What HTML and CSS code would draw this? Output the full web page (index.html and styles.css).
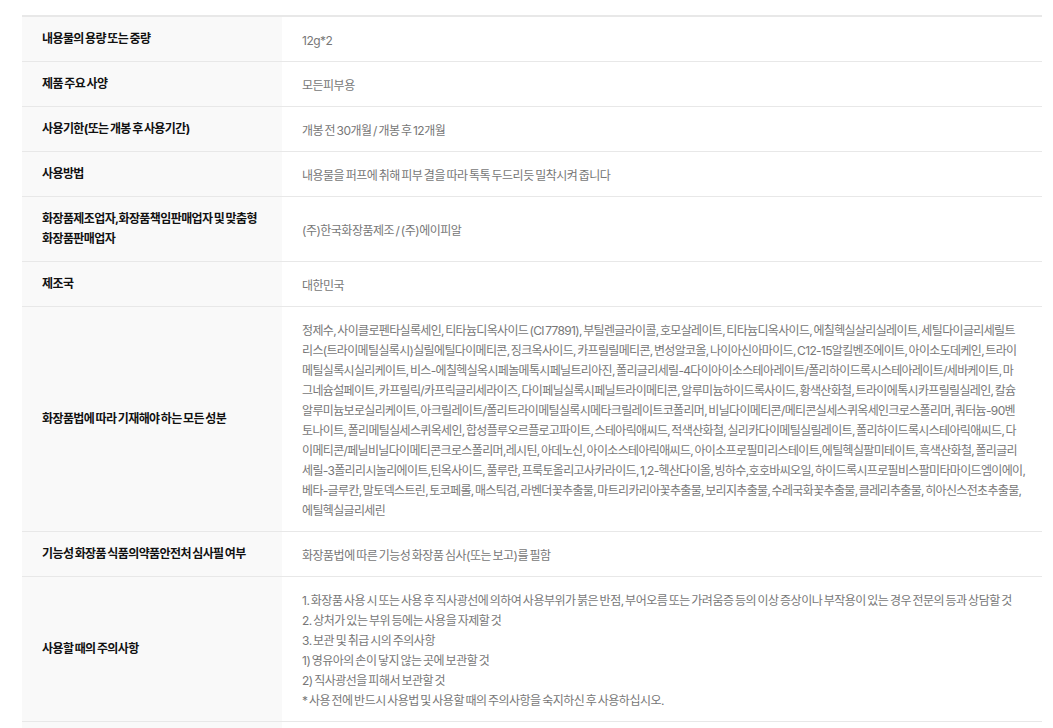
FILE: index.html
```html
<!DOCTYPE html>
<html lang="ko">
<head>
<meta charset="utf-8">
<title>상품정보제공고시</title>
<link rel="stylesheet" href="styles.css">
</head>
<body>
<main class="page">
<table class="info">
<tbody>
<tr><th>내용물의 용량 또는 중량</th><td>12g*2</td></tr>
<tr><th>제품 주요 사양</th><td>모든피부용</td></tr>
<tr><th>사용기한(또는 개봉 후 사용기간)</th><td>개봉 전 30개월 / 개봉 후 12개월</td></tr>
<tr><th>사용방법</th><td>내용물을 퍼프에 취해 피부 결을 따라 톡톡 두드리듯 밀착시켜 줍니다</td></tr>
<tr><th>화장품제조업자,화장품책임판매업자 및 맞춤형 화장품판매업자</th><td>(주)한국화장품제조 / (주)에이피알</td></tr>
<tr><th>제조국</th><td>대한민국</td></tr>
<tr><th>화장품법에 따라 기재해야 하는 모든 성분</th><td class="dense">정제수, 사이클로펜타실록세인, 티타늄디옥사이드 (CI 77891), 부틸렌글라이콜, 호모살레이트, 티타늄디옥사이드, 에칠헥실살리실레이트, 세틸다이글리세릴트<br>리스(트라이메틸실록시)실릴에틸다이메티콘, 징크옥사이드, 카프릴릴메티콘, 변성알코올, 나이아신아마이드, C12-15알킬벤조에이트, 아이소도데케인, 트라이<br>메틸실록시실리케이트, 비스-에칠헥실옥시페놀메톡시페닐트리아진, 폴리글리세릴-4다이아이소스테아레이트/폴리하이드록시스테아레이트/세바케이트, 마<br>그네슘설페이트, 카프릴릭/카프릭글리세라이즈, 다이페닐실록시페닐트라이메티콘, 알루미늄하이드록사이드, 황색산화철, 트라이에톡시카프릴릴실레인, 칼슘<br>알루미늄보로실리케이트, 아크릴레이트/폴리트라이메틸실록시메타크릴레이트코폴리머, 비닐다이메티콘/메티콘실세스퀴옥세인크로스폴리머, 쿼터늄-90벤<br>토나이트, 폴리메틸실세스퀴옥세인, 합성플루오르플로고파이트, 스테아릭애씨드, 적색산화철, 실리카다이메틸실릴레이트, 폴리하이드록시스테아릭애씨드, 다<br>이메티콘/페닐비닐다이메티콘크로스폴리머,레시틴, 아데노신, 아이소스테아릭애씨드, 아이소프로필미리스테이트,에틸헥실팔미테이트, 흑색산화철, 폴리글리<br>세릴-3폴리리시놀리에이트,틴옥사이드, 풀루란, 프룩토올리고사카라이드, 1,2-헥산다이올, 빙하수,호호바씨오일, 하이드록시프로필비스팔미타마이드엠이에이,<br>베타-글루칸, 말토덱스트린, 토코페롤, 매스틱검, 라벤더꽃추출물, 마트리카리아꽃추출물, 보리지추출물, 수레국화꽃추출물, 클레리추출물, 히아신스전초추출물,<br>에틸헥실글리세린</td></tr>
<tr><th>기능성 화장품 식품의약품안전처 심사필 여부</th><td>화장품법에 따른 기능성 화장품 심사(또는 보고)를 필함</td></tr>
<tr><th>사용할 때의 주의사항</th><td>1. 화장품 사용 시 또는 사용 후 직사광선에 의하여 사용부위가 붉은 반점, 부어오름 또는 가려움증 등의 이상 증상이나 부작용이 있는 경우 전문의 등과 상담할 것<br>2. 상처가 있는 부위 등에는 사용을 자제할 것<br>3. 보관 및 취급 시의 주의사항<br>1) 영유아의 손이 닿지 않는 곳에 보관할 것<br>2) 직사광선을 피해서 보관할 것<br>* 사용 전에 반드시 사용법 및 사용할 때의 주의사항을 숙지하신 후 사용하십시오.</td></tr>
<tr><th>&nbsp;</th><td>&nbsp;</td></tr>
</tbody>
</table>
</main>
</body>
</html>
```
FILE: styles.css
```css
html, body {
  margin: 0;
  padding: 0;
  height: 728px;
  overflow: hidden;
  background: #fff;
}
.page {
  padding: 15px 11px 0 22px;
}
.info {
  width: 1020px;
  table-layout: fixed;
  border-collapse: separate;
  border-spacing: 0;
  border-top: 2px solid #e8e8e8;
  font-family: Inter, "Noto Sans CJK KR", "Noto Sans", sans-serif;
  font-size: 12px;
  line-height: 20px;
}
.info th, .info td {
  border-bottom: 1px solid #e8e8e8;
  text-align: left;
  vertical-align: middle;
}
.info th {
  width: 220px;
  padding: 12px 20px;
  background: #f9f9f9;
  color: #111;
  font-weight: 700;
  letter-spacing: -0.6px;
  word-spacing: -0.9px;
}
.info td {
  padding: 14px 20px 10px;
  color: #777;
  font-weight: 400;
  letter-spacing: -0.5px;
  word-spacing: -1.4px;
}
.info td.dense {
  letter-spacing: -0.66px;
  white-space: nowrap;
}
```
